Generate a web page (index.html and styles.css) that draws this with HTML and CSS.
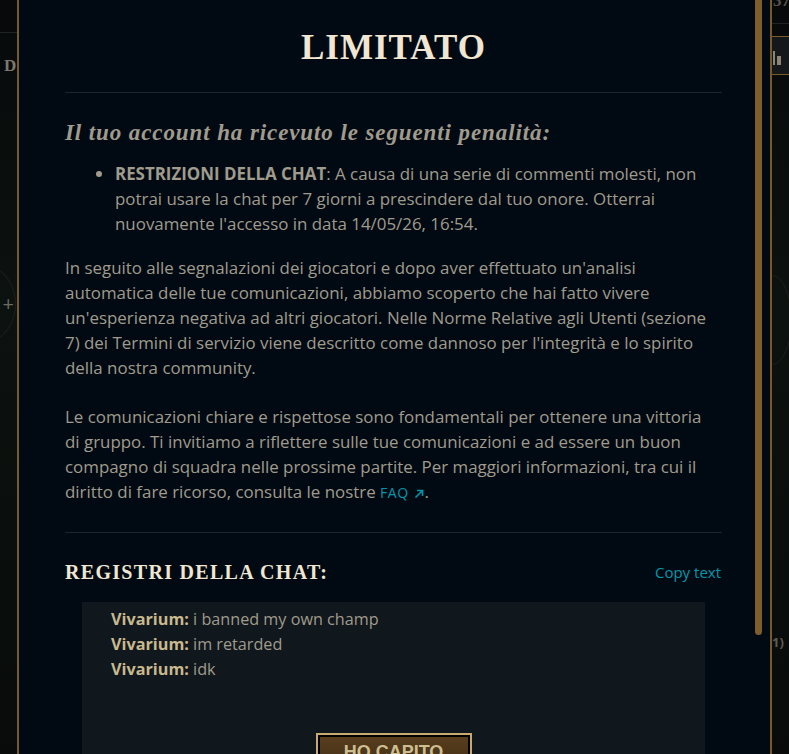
FILE: index.html
```html
<!DOCTYPE html>
<html lang="it">
<head>
    <meta charset="UTF-8">
    <title>Limitato</title>
    <link rel="stylesheet" href="styles.css">
</head>
<body>

    <div class="app">

        <!-- client behind the modal, left edge -->
        <div class="side side-left">
            <div class="side-rule"></div>
            <div class="side-letter">D</div>
            <div class="side-ring">+</div>
        </div>

        <!-- Penalty Modal -->
        <div class="modal">
            <div class="modal-scroll">
                <h1 class="modal-title">LIMITATO</h1>
                <hr class="divider">

                <h3 class="penalty-head">Il tuo account ha ricevuto le seguenti penalità:</h3>
                <ul class="penalty-list">
                    <li><strong>RESTRIZIONI DELLA CHAT</strong>: A causa di una serie di commenti molesti, non potrai usare la chat per 7 giorni a prescindere dal tuo onore. Otterrai nuovamente l'accesso in data 14/05/26, 16:54.</li>
                </ul>

                <p class="body-text">In seguito alle segnalazioni dei giocatori e dopo aver effettuato un'analisi automatica delle tue comunicazioni, abbiamo scoperto che hai fatto vivere un'esperienza negativa ad altri giocatori. Nelle Norme Relative agli Utenti (sezione 7) dei Termini di servizio viene descritto come dannoso per l'integrità e lo spirito della nostra community.</p>
                <p class="body-text second">Le comunicazioni chiare e rispettose sono fondamentali per ottenere una vittoria di gruppo. Ti invitiamo a riflettere sulle tue comunicazioni e ad essere un buon compagno di squadra nelle prossime partite. Per maggiori informazioni, tra cui il diritto di fare ricorso, consulta le nostre <a class="faq-link" href="#">FAQ<svg class="faq-icon" width="11" height="11" viewBox="0 0 11 11"><path d="M1.5 9.5 L8.5 2.5 M3 2.5 H8.5 V8" fill="none" stroke="currentColor" stroke-width="1.6"/></svg></a>.</p>

                <hr class="divider lower">

                <div class="log-head">
                    <h2>REGISTRI DELLA CHAT:</h2>
                    <a class="copy-link" href="#">Copy text</a>
                </div>

                <div class="chat-log">
                    <div class="chat-line"><b>Vivarium:</b> i banned my own champ</div>
                    <div class="chat-line"><b>Vivarium:</b> im retarded</div>
                    <div class="chat-line"><b>Vivarium:</b> idk</div>
                    <div class="btn-row">
                        <button class="ok-btn">HO CAPITO</button>
                    </div>
                </div>
            </div>
            <div class="scrollbar"><div class="thumb"></div></div>
        </div>

        <!-- client behind the modal, right edge -->
        <div class="side side-right">
            <div class="side-num">37</div>
            <div class="side-rule"></div>
            <div class="side-tab"><span class="bar b1"></span><span class="bar b2"></span></div>
            <div class="side-arc"></div>
            <div class="side-paren">1)</div>
        </div>

    </div>

</body>
</html>
```

FILE: styles.css
```css
* {
    box-sizing: border-box;
    margin: 0;
    padding: 0;
}

body {
    background: #070b0c;
    font-family: 'Open Sans', 'Noto Sans', sans-serif;
    height: 754px;
    overflow: hidden;
}

.app {
    display: flex;
    height: 754px;
    overflow: hidden;
}

/* side strips of the client */
.side {
    width: 17px;
    flex-shrink: 0;
    display: flex;
    flex-direction: column;
    overflow: hidden;
    background: linear-gradient(180deg, #07090a 0%, #0c120f 40%, #080b0a 100%);
}

.side-rule {
    height: 1px;
    background: #1e2328;
    margin-top: 32px;
}

.side-letter {
    font-family: 'Liberation Serif', serif;
    font-weight: bold;
    font-size: 17px;
    color: #7d796d;
    margin: 23px 0 0 4px;
}

.side-ring {
    margin: 190px 0 0 -44px;
    width: 60px;
    height: 76px;
    border: 1px solid #1c211e;
    border-radius: 50%;
    color: #6e6b60;
    font-size: 20px;
    line-height: 74px;
    text-align: right;
    padding-right: 1px;
}

.side-right {
    width: 17px;
}

.side-num {
    font-family: 'Liberation Serif', serif;
    font-weight: bold;
    font-size: 17px;
    color: #55524a;
    margin: -9px 0 0 1px;
    height: 16px;
}

.side-right .side-rule {
    margin-top: 16px;
}

.side-tab {
    margin-top: 12px;
    height: 39px;
    border-top: 1px solid #7a5c2a;
    border-bottom: 1px solid #7a5c2a;
    background: #14181a;
    display: flex;
    align-items: flex-end;
    gap: 2px;
    padding: 0 0 9px 1px;
}

.bar {
    width: 4px;
    background: #8a8576;
}

.b1 { height: 14px; width: 2px; }
.b2 { height: 9px; }

.side-arc {
    margin: 200px 0 0 -20px;
    width: 40px;
    height: 90px;
    border: 1px solid #1b1f1c;
    border-radius: 50%;
}

.side-paren {
    margin-top: 268px;
    font-size: 13px;
    font-weight: bold;
    color: #5e5a50;
}

/* modal */
.modal {
    width: 755px;
    flex-shrink: 0;
    display: flex;
    background: #010a13;
    border-left: 2px solid #785a28;
    border-right: 2px solid #785a28;
}

.modal-scroll {
    flex: 1;
    padding: 28px 33px 0 46px;
    color: #a09b8c;
}

.scrollbar {
    width: 7px;
    margin-right: 8px;
}

.thumb {
    height: 635px;
    background: #7c5e2c;
    border-radius: 0 0 4px 4px;
}

.modal-title {
    font-family: 'Liberation Serif', serif;
    font-size: 35px;
    line-height: 40px;
    letter-spacing: 1px;
    color: #f0e6d2;
    text-align: center;
}

.divider {
    border: none;
    height: 1px;
    background: #1e2529;
    margin-top: 24px;
}

.penalty-head {
    font-family: 'Liberation Serif', serif;
    font-style: italic;
    font-size: 23px;
    line-height: 28px;
    letter-spacing: 0.9px;
    color: #a09b8c;
    margin-top: 26px;
}

.penalty-list {
    margin-top: 14px;
    padding-left: 50px;
}

.penalty-list li,
.body-text {
    font-size: 16.9px;
    line-height: 25px;
}

.penalty-list strong {
    font-weight: bold;
}

.body-text {
    margin-top: 19px;
    max-width: 650px;
}

.body-text.second {
    margin-top: 24px;
}

.faq-link {
    color: #0397ab;
    text-decoration: none;
    font-size: 14px;
    letter-spacing: 0.5px;
}

.faq-icon {
    margin-left: 5px;
    vertical-align: -1px;
}

.divider.lower {
    margin-top: 27px;
}

.log-head {
    display: flex;
    justify-content: space-between;
    align-items: center;
    margin-top: 25px;
    height: 28px;
}

.log-head h2 {
    font-family: 'Liberation Serif', serif;
    font-size: 20px;
    letter-spacing: 1.3px;
    color: #f0e6d2;
}

.copy-link {
    color: #0397ab;
    text-decoration: none;
    font-size: 15px;
    margin-right: 1px;
}

.chat-log {
    margin: 16px 17px 0 17px;
    background: #10171d;
    padding: 5px 0 0 29px;
    height: 152px;
    overflow: hidden;
}

.chat-line {
    font-size: 16.2px;
    line-height: 25px;
    color: #a09b8c;
}

.chat-line b {
    color: #c9b98e;
}

.btn-row {
    display: flex;
    justify-content: center;
    margin: 51px 29px 0 0;
}

.ok-btn {
    width: 156px;
    height: 42px;
    flex-shrink: 0;
    border: 2px solid #c8aa6e;
    outline: 2px solid #000;
    outline-offset: -4px;
    background: linear-gradient(180deg, #5a3f1e 0%, #3e2a14 100%);
    color: #cdbe91;
    font-family: 'Liberation Sans', sans-serif;
    font-weight: bold;
    font-size: 18px;
    padding-bottom: 4px;
}
```
